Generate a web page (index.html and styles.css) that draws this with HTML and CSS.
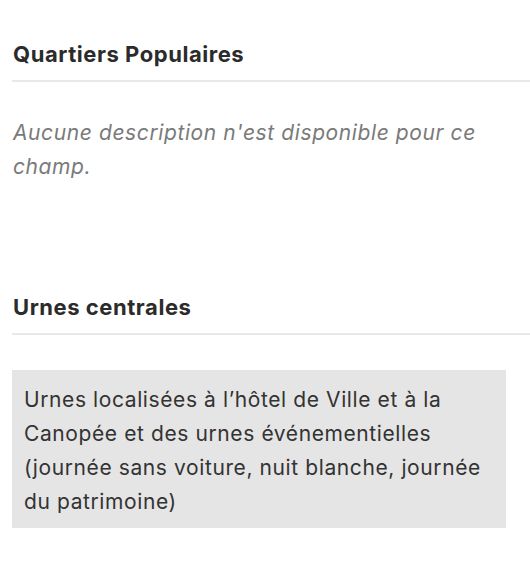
FILE: index.html
```html
<!DOCTYPE html>
<html lang="fr">
<head>
    <meta charset="UTF-8">
    <meta name="viewport" content="width=device-width, initial-scale=1.0">
    <title>Champs</title>
    <link rel="stylesheet" href="styles.css">
</head>
<body>
    <div class="fields">
        <section class="field">
            <h2 class="field-title">Quartiers Populaires</h2>
            <p class="field-empty">Aucune description n'est disponible pour ce champ.</p>
        </section>

        <section class="field">
            <h2 class="field-title">Urnes centrales</h2>
            <div class="field-value">
                Urnes localisées à l’hôtel de Ville et à la Canopée et des urnes événementielles (journée sans voiture, nuit blanche, journée du patrimoine)
            </div>
        </section>
    </div>
</body>
</html>
```

FILE: styles.css
```css
body {
    font-family: Inter, "Liberation Sans", Arial, sans-serif;
    margin: 0;
    padding: 0 0 0 12px;
    color: #333;
    background: #fff;
}
.fields {
    display: flex;
    flex-direction: column;
}
.field-title {
    margin: 40px 0 0 0;
    padding: 0 0 12px 1px;
    font-size: 22px;
    font-weight: bold;
    letter-spacing: 0.55px;
    line-height: 28px;
    color: #2b2b2b;
    border-bottom: 2px solid #e8e8e8;
}
.field-empty {
    margin: 34px 0 69px 0;
    padding-left: 1px;
    font-size: 21px;
    letter-spacing: 0.6px;
    line-height: 34px;
    font-style: italic;
    color: #7a7a7a;
}
.field-value {
    margin-top: 35px;
    width: 494px;
    box-sizing: border-box;
    padding: 13px 12px 9px 12px;
    font-size: 21px;
    letter-spacing: 0.6px;
    line-height: 34px;
    background: #e5e5e5;
}
```
